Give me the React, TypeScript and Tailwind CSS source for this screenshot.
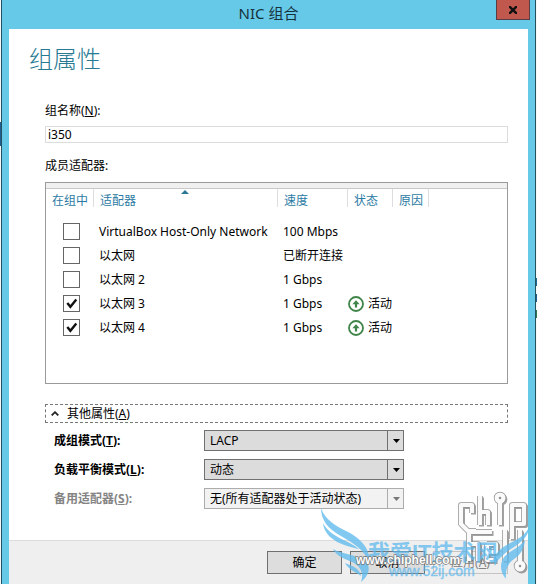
import React from 'react';

interface Adapter {
  name: string;
  speed: string;
  member: boolean;
  active?: boolean;
}

const adapters: Adapter[] = [
  { name: 'VirtualBox Host-Only Network', speed: '100 Mbps', member: false },
  { name: '以太网', speed: '已断开连接', member: false },
  { name: '以太网 2', speed: '1 Gbps', member: false },
  { name: '以太网 3', speed: '1 Gbps', member: true, active: true },
  { name: '以太网 4', speed: '1 Gbps', member: true, active: true },
];

const columns = [
  { title: '在组中', width: 'w-[47px]' },
  { title: '适配器', width: 'w-[184px]', sorted: true },
  { title: '速度', width: 'w-[70px]' },
  { title: '状态', width: 'w-[45px]' },
  { title: '原因', width: 'w-[36px]' },
];

function UpIcon() {
  return (
    <svg className="h-4 w-4 shrink-0" viewBox="0 0 16 16" fill="none" stroke="#3f8549">
      <circle cx="8" cy="8" r="7" strokeWidth="1.8" />
      <path d="M8 11.5V6" strokeWidth="2.2" />
      <path d="M4.4 8.2 8 4.2 11.6 8.2Z" fill="#3f8549" stroke="none" />
    </svg>
  );
}

function AdapterCheckbox({ label, checked }: { label: string; checked: boolean }) {
  return (
    <span className="relative ml-[17px] block h-[17px] w-[17px]">
      <input
        type="checkbox"
        aria-label={label}
        defaultChecked={checked}
        className="peer block h-[17px] w-[17px] appearance-none border border-[#666] bg-white"
      />
      <svg className="pointer-events-none absolute inset-0 hidden h-full w-full peer-checked:block" viewBox="0 0 17 17" fill="none">
        <path d="M4.3 8 7.4 11.8 13.3 4.6" stroke="#111" strokeWidth="2.4" />
      </svg>
    </span>
  );
}

function AdapterTable() {
  return (
    <div className="mt-1.5 h-[202px] border border-[#9a9a9a]">
      <div className="h-1.5 border-b border-[#c8c8c8] bg-[#f0f0f0]" />
      <table className="w-full table-fixed border-collapse text-left whitespace-nowrap">
        <thead>
          <tr className="h-[30px] align-top">
            {columns.map((column, i) => (
              <th key={column.title} className={`relative p-0 font-normal text-[#2b7aa3] ${column.width}`}>
                <div className={`h-[18px] pt-1 pl-1.5 ${i > 0 ? 'border-l border-[#dedede]' : ''}`}>{column.title}</div>
                {column.sorted && (
                  <svg className="absolute top-px left-1/2 -ml-1 h-1 w-2" viewBox="0 0 8 4" fill="#2b7796">
                    <path d="M0 4 4 0 8 4z" />
                  </svg>
                )}
              </th>
            ))}
            <td className="p-0">
              <div className="h-[18px] border-l border-[#dedede]" />
            </td>
          </tr>
        </thead>
        <tbody>
          {adapters.map((adapter) => (
            <tr key={adapter.name} className="h-6">
              <td className="p-0"><AdapterCheckbox label={adapter.name} checked={adapter.member} /></td>
              <td className="p-0 pt-0.5 pl-1.5">{adapter.name}</td>
              <td className="p-0 pt-0.5 pl-1.5">{adapter.speed}</td>
              <td className="p-0 pt-0.5 pl-px" colSpan={2}>
                {adapter.active && (
                  <span className="flex items-center gap-1">
                    <UpIcon />
                    活动
                  </span>
                )}
              </td>
              <td className="p-0" />
            </tr>
          ))}
        </tbody>
      </table>
    </div>
  );
}

interface ModeSelectProps {
  id: string;
  label: string;
  accessKey: string;
  value: string;
  disabled?: boolean;
}

function ModeSelect({ id, label, accessKey, value, disabled }: ModeSelectProps) {
  return (
    <div className="flex items-center">
      <label htmlFor={id} className={`w-[150px] shrink-0 font-bold ${disabled ? 'text-[#848484]' : 'text-black'}`}>
        {label}(<span className="underline">{accessKey}</span>):
      </label>
      <div className="relative w-[200px]">
        <select
          id={id}
          disabled={disabled}
          className={`block h-[21px] w-full appearance-none border pr-5 pl-[5px] text-black opacity-100 ${disabled ? 'border-[#acacac] bg-[#f2f2f2]' : 'border-[#707070] bg-[#dcdcdc]'}`}
        >
          <option>{value}</option>
        </select>
        <span className={`pointer-events-none absolute inset-y-0 right-0 flex w-[17px] items-center justify-center border-l ${disabled ? 'border-[#acacac] text-[#777]' : 'border-[#707070] text-black'}`}>
          <svg className="h-1 w-[7px]" viewBox="0 0 7 4" fill="currentColor">
            <path d="M0 0h7L3.5 4z" />
          </svg>
        </span>
      </div>
    </div>
  );
}

function CircuitLogo() {
  return (
    <g fill="none" strokeLinejoin="round">
      <path d="M154 29V21H143V40L151 48V77" />
      <path d="M151 47H158M162 12V41M162 28H170V41" />
      <path d="M182 19V41" />
      <circle cx="182" cy="14" r="3.4" />
      <path d="M194 55V21H206V40H194" />
      <path d="M151 48H174M151 60H160V77" />
      <path d="M169 60V76H178M169 60H178V68H169" />
      <path d="M187 46V77M202 46V78" />
      <circle cx="202" cy="82" r="3.4" />
    </g>
  );
}

function Watermark() {
  return (
    <div className="pointer-events-none absolute right-px bottom-0 h-[100px] w-[218px]">
      <svg className="h-full w-full" viewBox="0 0 218 100">
        <g stroke="#666666" strokeWidth="5" opacity="0.6" transform="translate(1.5 1.5)">
          <CircuitLogo />
        </g>
        <g stroke="#909090" strokeWidth="5.6">
          <CircuitLogo />
        </g>
        <g stroke="#fafafa" strokeWidth="4.2">
          <CircuitLogo />
        </g>
        <g fill="#62bced" opacity="0.8">
          <path d="M3 24C7 36 18 42 30 48C43 55 53 65 51 79C47 66 35 59 23 52C10 45 3 36 3 24Z" />
          <path d="M5 39C12 53 30 56 41 65C28 62 7 57 5 39Z" />
          <path d="M15 65C23 70 39 70 48 78C53 83 51 92 43 98C46 90 43 83 36 79C28 75 19 73 15 65Z" />
          <path d="M27 79C35 82 42 85 43 92C38 88 31 86 27 79Z" />
          <path d="M211 43C207 53 197 56 187 62C179 67 174 74 177 82C180 73 190 67 199 61C206 56 211 50 211 43Z" />
          <path d="M207 56C201 64 192 67 187 72C181 79 182 88 188 95C187 86 190 79 196 75C203 71 206 64 207 56Z" />
        </g>
        <g fill="#55b6ee" opacity="0.7" fontFamily="'Liberation Sans', 'Noto Sans CJK SC', sans-serif">
          <text x="50" y="76" fontSize="22" fontWeight="bold">我爱IT技术网</text>
          <text x="71" y="92" fontSize="14" stroke="#55b6ee" strokeWidth="0.4">www.52ij.com</text>
        </g>
        <g fontFamily="'Liberation Sans', sans-serif" fontSize="12" fontWeight="bold">
          <text x="38" y="80" fill="#fff" stroke="#777" strokeWidth="1.4" strokeLinejoin="round" paintOrder="stroke">www.chiphell.com</text>
        </g>
      </svg>
    </div>
  );
}

export default function App() {
  return (
    <div className="relative flex min-h-screen flex-col overflow-hidden bg-[#f4fafc] px-px font-['Noto_Sans','Noto_Sans_CJK_SC',sans-serif] text-xs leading-4 text-black">
      <span className="absolute top-[122px] left-0 h-6 w-px bg-[#1c5f93]" />
      <span className="absolute top-[278px] right-0 h-2 w-px bg-[#1c6a93]" />
      <span className="absolute top-[294px] right-0 h-2 w-px bg-[#1c5f93]" />
      <span className="absolute top-[310px] right-0 h-2 w-px bg-[#2c7a50]" />

      <div className="flex flex-1 flex-col border-x border-[#24505f] bg-[#67c9e8] px-[7px]">
        <header className="relative flex h-[29px] shrink-0 items-center justify-center pb-1">
          <h1 className="text-[15px] leading-5 text-[#15333d]">NIC 组合</h1>
          <button type="button" aria-label="关闭" className="absolute top-0 -right-0.5 flex h-5 w-[34px] items-center justify-center border border-t-0 border-[#5a3d44] bg-[#c0584e]">
            <svg className="h-2 w-2" viewBox="0 0 8 8" stroke="#111" strokeWidth="2.4">
              <path d="M0 0 8 8M8 0 0 8" />
            </svg>
          </button>
        </header>

        <main className="bg-white px-5 pb-[31px]">
          <h2 className="pt-3 text-2xl leading-9 font-light text-[#277a92]">组属性</h2>
          <div className="pt-6 pl-4">
            <label htmlFor="team-name" className="block leading-5">组名称(<span className="underline">N</span>):</label>
            <input id="team-name" type="text" defaultValue="i350" className="mt-[5px] block h-[17px] w-full border border-[#dcdcdc] px-0.5 text-xs" />
            <h3 className="mt-[13px] leading-5">成员适配器:</h3>

            <AdapterTable />

            <button type="button" aria-expanded="true" className="mt-5 flex h-[19px] w-full items-center gap-2 border border-dashed border-[#777] pl-[5px]">
              <svg className="h-[5px] w-2" viewBox="0 0 8 5" fill="none" stroke="#222" strokeWidth="1.8">
                <path d="M.7 4.4 4 1.2 7.3 4.4" />
              </svg>
              <span>其他属性(<span className="underline">A</span>)</span>
            </button>

            <div className="mt-[7px] flex flex-col gap-2 pl-[9px]">
              <ModeSelect id="teaming-mode" label="成组模式" accessKey="T" value="LACP" />
              <ModeSelect id="balance-mode" label="负载平衡模式" accessKey="L" value="动态" />
              <ModeSelect id="standby-adapter" label="备用适配器" accessKey="S" value="无(所有适配器处于活动状态)" disabled />
            </div>
          </div>
        </main>

        <footer className="flex flex-1 items-start justify-end gap-2 border-t border-[#dcdcdc] bg-[#efefef] px-5 pt-[10px] pb-2">
          <button type="button" className="h-[23px] w-[75px] border border-[#707070] bg-[#dddddd]">确定</button>
          <button type="button" className="h-[23px] w-[75px] border border-[#707070] bg-[#dddddd]">取消</button>
          <button type="button" disabled className="h-[23px] w-[75px] border border-[#c4c4c4] bg-[#efefef] text-[#838383]">
            应用(<span className="underline">A</span>)
          </button>
        </footer>
      </div>
      <Watermark />
    </div>
  );
}
